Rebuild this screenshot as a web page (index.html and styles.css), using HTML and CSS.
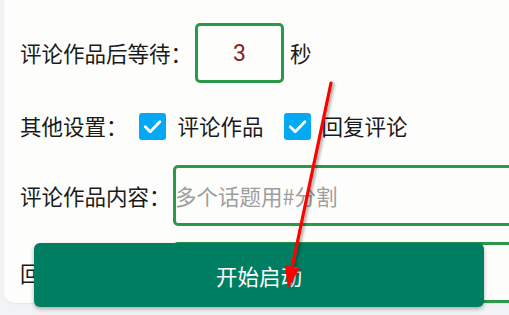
FILE: index.html
```html
<!DOCTYPE html>
<html lang="zh">
<head>
<meta charset="utf-8">
<link rel="stylesheet" href="styles.css">
</head>
<body>
<div class="screen">
  <div class="card">
    <div class="row row-wait">
      <span class="label">评论作品后等待：</span>
      <div class="field num"><span class="num-value">3</span></div>
      <span class="unit">秒</span>
    </div>
    <div class="row row-opts">
      <span class="label">其他设置：</span>
      <span class="check"><svg viewBox="0 0 27 27" width="27" height="27"><path d="M6.3 13.8 L11.2 18.7 L20.9 8.7" fill="none" stroke="#fff" stroke-width="2.8" stroke-linecap="round" stroke-linejoin="round"/></svg></span>
      <span class="opt">评论作品</span>
      <span class="check check-2"><svg viewBox="0 0 27 27" width="27" height="27"><path d="M6.3 13.8 L11.2 18.7 L20.9 8.7" fill="none" stroke="#fff" stroke-width="2.8" stroke-linecap="round" stroke-linejoin="round"/></svg></span>
      <span class="opt opt-2">回复评论</span>
    </div>
    <div class="row row-text">
      <span class="label">评论作品内容：</span>
      <div class="field wide"><span class="placeholder">多个话题用#分割</span></div>
    </div>
    <div class="row row-text">
      <span class="label">回复评论内容：</span>
      <div class="field wide"></div>
    </div>
  </div>
  <button class="start">开始启动</button>
  <svg class="arrow" width="509" height="315" viewBox="0 0 509 315">
    <defs>
      <filter id="sh" x="-50%" y="-10%" width="200%" height="120%">
        <feDropShadow dx="2" dy="1" stdDeviation="1.4" flood-color="#000" flood-opacity="0.35"/>
      </filter>
    </defs>
    <g filter="url(#sh)">
      <line x1="331" y1="83" x2="291.5" y2="270" stroke="#ff0000" stroke-width="3.2" stroke-linecap="round"/>
      <polygon points="288,288 284.8,265 299.6,268.2" fill="#ff0000"/>
    </g>
  </svg>
</div>
</body>
</html>
```
FILE: styles.css
```css
html, body {
  margin: 0;
  padding: 0;
}
body {
  width: 509px;
  height: 315px;
  overflow: hidden;
  background: #f2f3f5;
  font-family: "Noto Sans CJK SC", "Noto Sans", sans-serif;
  color: #1a1a1a;
}
.screen {
  position: relative;
  width: 509px;
  height: 315px;
  padding-left: 4px;
  box-sizing: border-box;
  overflow: hidden;
}
.card {
  width: 560px;
  height: 303px;
  background: #fdfdfb;
  border-radius: 0 0 10px 10px;
  box-shadow: 0 1px 2px rgba(0,0,0,0.06);
  overflow: hidden;
  box-sizing: border-box;
  padding-left: 16px;
  padding-top: 23px;
  display: flex;
  flex-direction: column;
}
.row {
  display: flex;
  align-items: center;
  font-size: 21.5px;
  line-height: 1;
  flex: none;
}
.label {
  white-space: nowrap;
  flex: none;
}
.row-wait {
  height: 60px;
}
.row-opts {
  height: 46px;
  margin-top: 20px;
}
.row-text {
  height: 61px;
  margin-top: 16px;
}
.field {
  box-sizing: border-box;
  border: 3px solid #2a9948;
  border-radius: 5px;
  height: 100%;
  display: flex;
  align-items: center;
  flex: none;
}
.num {
  width: 89px;
  margin-left: 3px;
  justify-content: center;
}
.num-value {
  font-family: Roboto, "Noto Sans CJK SC", sans-serif;
  font-size: 23px;
  color: #8a1c2b;
}
.unit {
  margin-left: 6px;
}
.check {
  width: 27px;
  height: 27px;
  border-radius: 3px;
  background: #03a9f4;
  margin-left: 11px;
  display: flex;
  flex: none;
}
.check-2 {
  margin-left: 20px;
}
.opt {
  margin-left: 12px;
  white-space: nowrap;
}
.opt-2 {
  margin-left: 11px;
}
.wide {
  width: 400px;
  margin-left: 2.5px;
}
.placeholder {
  color: #9e9e9e;
  white-space: nowrap;
  margin-left: -1px;
}
.start {
  position: absolute;
  left: 34px;
  top: 243px;
  width: 450px;
  height: 64px;
  border: none;
  border-radius: 6px;
  background: #007e62;
  color: #ffffff;
  font-family: "Noto Sans CJK SC", sans-serif;
  font-size: 21.5px;
  box-shadow: 0 2px 4px rgba(0,0,0,0.3);
  padding: 0;
}
.arrow {
  position: absolute;
  left: 0;
  top: 0;
  pointer-events: none;
}
```
